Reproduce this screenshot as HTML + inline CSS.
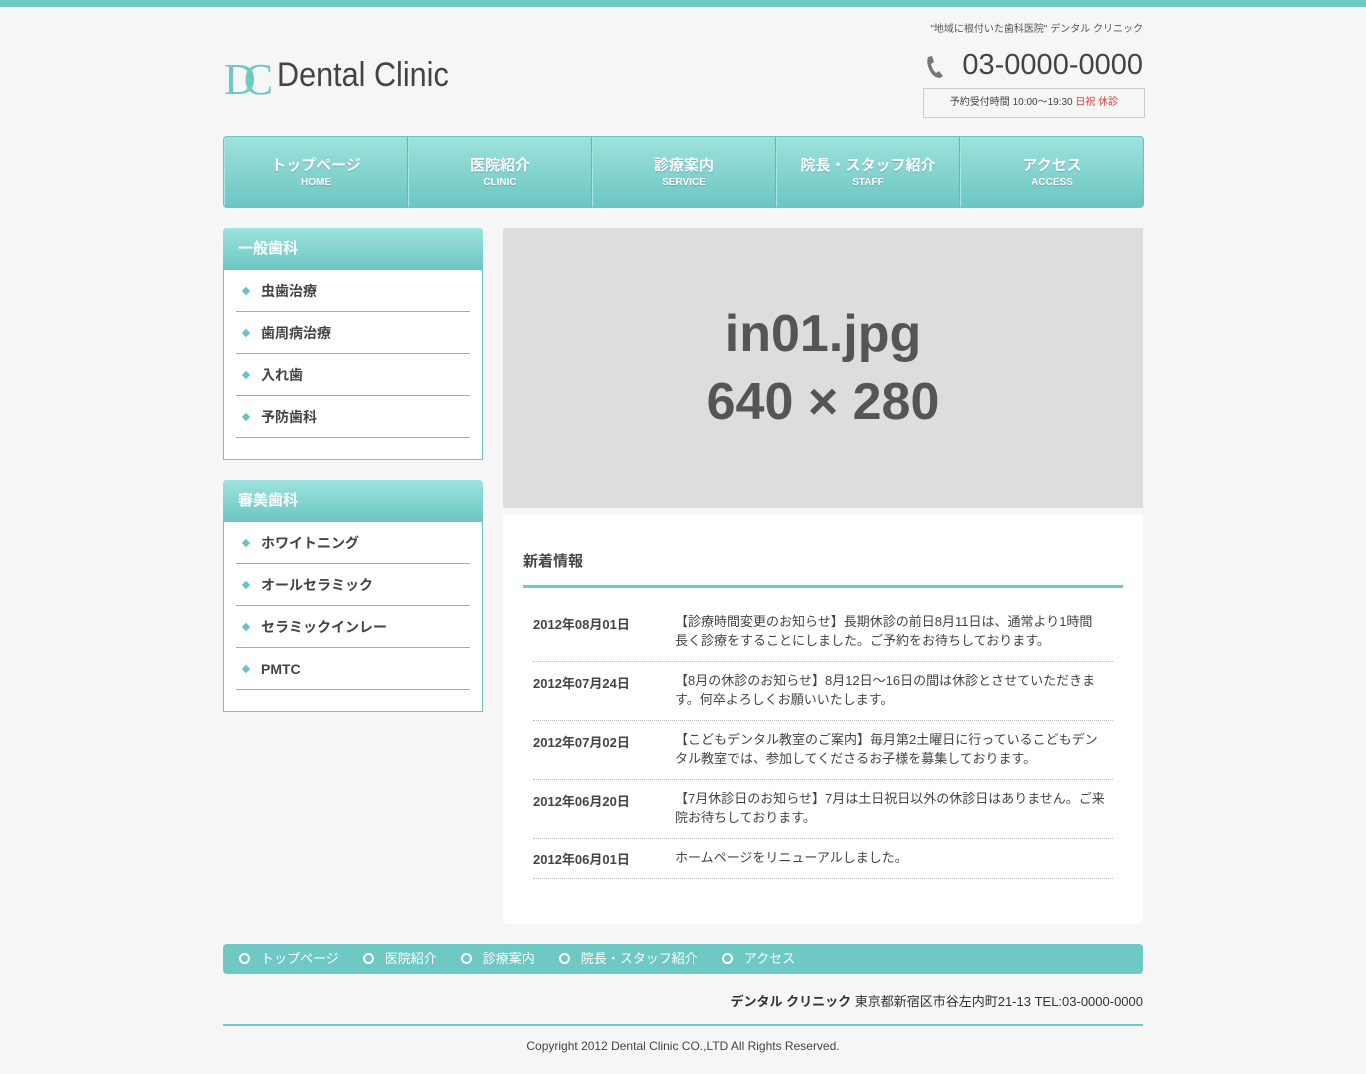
<!DOCTYPE html>
<html><head><meta charset="utf-8"><style>
*{margin:0;padding:0;box-sizing:border-box}
body{width:1366px;height:1074px;background:#f6f6f6;font-family:"Liberation Sans","Noto Sans CJK JP",sans-serif;color:#444;position:relative;overflow:hidden}
.abs{position:absolute}
.top{left:0;top:0;width:1366px;height:7px;background:#6ec8c3}
.nav{left:223px;top:136px;width:921px;height:72px;border:1px solid #6cc4c0;border-radius:4px;background:linear-gradient(#9de2de,#6cc6c2);display:flex;overflow:hidden}
.nav div{flex:1;border-right:1px solid #63b8b4;border-left:1px solid #a8e6e3;color:#fff;text-align:center;padding-top:17px;font-size:15px;font-weight:bold;text-shadow:0 1px 1px rgba(0,0,0,.2)}
.nav div:last-child{border-right:0}
.nav div small{display:block;font-size:10px;margin-top:2px}
.box{left:223px;width:260px;height:232px;border:1px solid #6cc4c0;background:#fff;border-radius:4px 4px 0 0}
.box h3{height:42px;background:linear-gradient(#9de2de,#6cc6c2);color:#fff;font-size:15px;line-height:42px;padding-left:15px;margin:-1px -1px 0;border-radius:4px 4px 0 0}
.box ul{list-style:none;margin:0 12px}
.box li{height:42px;border-bottom:1px solid #6cc4c0;font-size:14px;font-weight:bold;line-height:43px;padding-left:25px;position:relative;color:#444}
.box li:before{content:"";position:absolute;left:7px;top:18px;width:6px;height:6px;background:#6cc4c0;transform:rotate(45deg)}
.img{left:503px;top:228px;width:640px;height:280px;background:#ddd;color:#555;text-align:center;font-size:52px;font-weight:bold;line-height:68px;padding-top:72px}
.news{left:503px;top:515px;width:640px;height:409px;background:#fff;border-radius:0 0 5px 5px}
.row{position:absolute;left:30px;width:580px;border-bottom:1px dotted #bbb;font-size:13px;line-height:19px;height:59px}
.row b{position:absolute;left:0;top:12px;font-size:13px}
.row span{position:absolute;left:142px;top:9px;width:430px}
.fnav{left:223px;top:944px;width:920px;height:30px;background:#6ec8c3;border-radius:4px;color:#fff;font-size:13px;line-height:30px;padding-left:16px}
.fnav span{margin-right:24px}
.fnav i{display:inline-block;width:11px;height:11px;border:2px solid #fff;border-radius:50%;margin-right:11px;vertical-align:-1px}
</style></head><body>
<div class="abs top"></div>
<div class="abs" style="right:223px;top:20px;font-size:10px;color:#555">"地域に根付いた歯科医院" デンタル クリニック</div>
<div class="abs" style="left:224px;top:58px;font-family:'Liberation Serif',serif;font-size:44px;color:#6ec8c3;letter-spacing:-12px;line-height:44px">DC</div>
<div class="abs" style="left:277px;top:56px;font-family:'Liberation Sans Narrow','Liberation Sans',sans-serif;font-size:34px;color:#444;transform:scaleX(0.9);transform-origin:left">Dental Clinic</div>
<svg class="abs" style="left:924px;top:55px" width="20" height="24" viewBox="0 0 20 24"><path d="M4 2 L8 1 L10 7 L7 9 Q8 14 12 18 L15 16 L19 21 L16 23 Q9 23 5 14 Q2 7 4 2Z" fill="#777"/></svg>
<div class="abs" style="right:223px;top:49px;font-size:29px;color:#444">03-0000-0000</div>
<div class="abs" style="left:923px;top:88px;width:222px;height:30px;border:1px solid #ccc;font-size:10px;line-height:28px;text-align:center;color:#444">予約受付時間 10:00～19:30 <span style="color:#c44">日祝 休診</span></div>
<div class="abs nav"><div>トップページ<small>HOME</small></div><div>医院紹介<small>CLINIC</small></div><div>診療案内<small>SERVICE</small></div><div>院長・スタッフ紹介<small>STAFF</small></div><div>アクセス<small>ACCESS</small></div></div>
<div class="abs box" style="top:228px"><h3>一般歯科</h3><ul><li>虫歯治療</li><li>歯周病治療</li><li>入れ歯</li><li>予防歯科</li></ul></div>
<div class="abs box" style="top:480px"><h3>審美歯科</h3><ul><li>ホワイトニング</li><li>オールセラミック</li><li>セラミックインレー</li><li>PMTC</li></ul></div>
<div class="abs img">in01.jpg<br>640 × 280</div>
<div class="abs news">
<div class="abs" style="left:20px;top:35px;font-size:15px;font-weight:bold">新着情報</div>
<div class="abs" style="left:20px;top:70px;width:600px;height:3px;background:#6ec8c3"></div>
<div class="row" style="top:88px"><b>2012年08月01日</b><span>【診療時間変更のお知らせ】長期休診の前日8月11日は、通常より1時間長く診療をすることにしました。ご予約をお待ちしております。</span></div>
<div class="row" style="top:147px"><b>2012年07月24日</b><span>【8月の休診のお知らせ】8月12日～16日の間は休診とさせていただきます。何卒よろしくお願いいたします。</span></div>
<div class="row" style="top:206px"><b>2012年07月02日</b><span>【こどもデンタル教室のご案内】毎月第2土曜日に行っているこどもデンタル教室では、参加してくださるお子様を募集しております。</span></div>
<div class="row" style="top:265px"><b>2012年06月20日</b><span>【7月休診日のお知らせ】7月は土日祝日以外の休診日はありません。ご来院お待ちしております。</span></div>
<div class="row" style="top:324px;height:40px"><b style="top:11px">2012年06月01日</b><span>ホームページをリニューアルしました。</span></div>
</div>
<div class="abs fnav"><span><i></i>トップページ</span><span><i></i>医院紹介</span><span><i></i>診療案内</span><span><i></i>院長・スタッフ紹介</span><span><i></i>アクセス</span></div>
<div class="abs" style="right:223px;top:991px;font-size:13px;color:#333"><b>デンタル クリニック</b> 東京都新宿区市谷左内町21-13 TEL:03-0000-0000</div>
<div class="abs" style="left:223px;top:1024px;width:920px;height:2px;background:#6ec8c3"></div>
<div class="abs" style="left:223px;top:1039px;width:920px;text-align:center;font-size:12px;color:#444">Copyright 2012 Dental Clinic CO.,LTD All Rights Reserved.</div>
</body></html>
